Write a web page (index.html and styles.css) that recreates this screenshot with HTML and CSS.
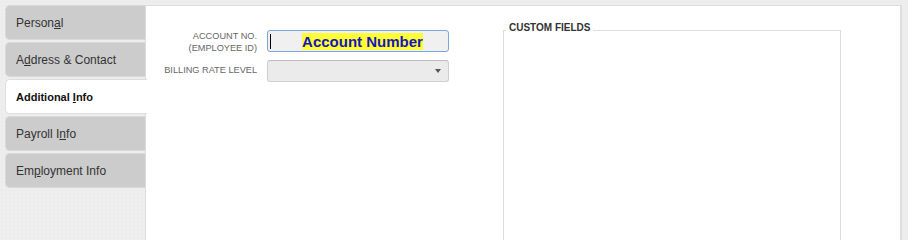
FILE: index.html
```html
<!DOCTYPE html>
<html>
<head>
<meta charset="utf-8">
<link rel="stylesheet" href="styles.css">
</head>
<body>
<div class="layout">
  <nav class="tabs">
    <div class="tab"><span>Person<u>a</u>l</span></div>
    <div class="tab"><span>A<u>d</u>dress &amp; Contact</span></div>
    <div class="tab active"><span>Additional <u>I</u>nfo</span></div>
    <div class="tab"><span>Payroll I<u>n</u>fo</span></div>
    <div class="tab"><span>Em<u>p</u>loyment Info</span></div>
  </nav>
  <main class="panel">
    <div class="form">
      <label class="lbl lbl-top">ACCOUNT NO.<br>(EMPLOYEE ID)</label>
      <div class="input"><span class="caret"></span><span class="value"><span class="hl">Account Number</span></span></div>
      <label class="lbl lbl-mid">BILLING RATE LEVEL</label>
      <div class="select"><span class="arrow"></span></div>
    </div>
    <fieldset class="custom">
      <legend>CUSTOM FIELDS</legend>
    </fieldset>
  </main>
</div>
</body>
</html>
```

FILE: styles.css
```css
html, body {
  margin: 0;
  padding: 0;
  overflow: hidden;
  height: 100%;
}
body {
  background-color: #eeeeee;
  background-image: radial-gradient(#e6e6e6 0.6px, transparent 0.8px);
  background-size: 4px 4px;
  font-family: "Liberation Sans", Arial, sans-serif;
}
.layout {
  display: flex;
  align-items: stretch;
  padding: 5px 6px 0 5px;
  height: 100%;
  box-sizing: border-box;
  overflow: hidden;
}
.tabs {
  display: flex;
  flex-direction: column;
  gap: 2px;
  width: 140px;
  flex: none;
}
.tab {
  height: 35px;
  box-sizing: border-box;
  display: flex;
  align-items: center;
  padding-left: 10px;
  background: #cccccc;
  border: 1px solid #d9d9d9;
  border-right: 0;
  border-radius: 5px 0 0 5px;
  font-size: 12px;
  color: #333333;
}
.tab u {
  text-decoration-thickness: 1px;
}
.tab.active {
  background: #ffffff;
  border-color: #dedede;
  font-weight: bold;
  font-size: 11px;
  color: #111111;
  width: 142px;
  position: relative;
  z-index: 1;
}
.panel {
  flex: 1;
  min-height: 220px;
  box-sizing: border-box;
  background: #ffffff;
  border: 1px solid #dcdcdc;
  border-bottom: 0;
  border-right: 2px solid #dedede;
  display: flex;
  align-items: flex-start;
  overflow: hidden;
}
.form {
  display: grid;
  grid-template-columns: 100px 182px;
  column-gap: 10px;
  row-gap: 6px;
  margin: 24px 0 0 11px;
}
.lbl {
  font-size: 9.2px;
  line-height: 12px;
  color: #666666;
  text-align: right;
}
.lbl-top {
  align-self: start;
}
.lbl-mid {
  align-self: center;
  margin-top: -3px;
}
.input {
  box-sizing: border-box;
  height: 22px;
  border: 1px solid #7da6dc;
  border-radius: 3px;
  background: #f0f0f0;
  display: flex;
  align-items: center;
  padding-left: 2px;
}
.caret {
  width: 1px;
  height: 15px;
  background: #000000;
  flex: none;
}
.value {
  flex: 1;
  text-align: center;
  padding-left: 6px;
  font-size: 15px;
  font-weight: bold;
  line-height: 17px;
  color: #1515c0;
}
.hl {
  background: #ffff33;
}
.select {
  box-sizing: border-box;
  height: 22px;
  border: 1px solid #cfcfcf;
  border-top-color: #bdbdbd;
  border-radius: 3px;
  background: #ebebeb;
  display: flex;
  align-items: center;
  justify-content: flex-end;
  padding-right: 7px;
}
.arrow {
  width: 0;
  height: 0;
  border-left: 3.5px solid transparent;
  border-right: 3.5px solid transparent;
  border-top: 4px solid #555555;
}
.custom {
  margin: 17px 0 0 54px;
  width: 338px;
  box-sizing: border-box;
  height: 400px;
  border: 1px solid #dddddd;
  padding: 0 0 0 2px;
}
.custom legend {
  padding: 0 3px 5px 3px;
  font-size: 10px;
  line-height: 10px;
  font-weight: bold;
  color: #333333;
}
```
